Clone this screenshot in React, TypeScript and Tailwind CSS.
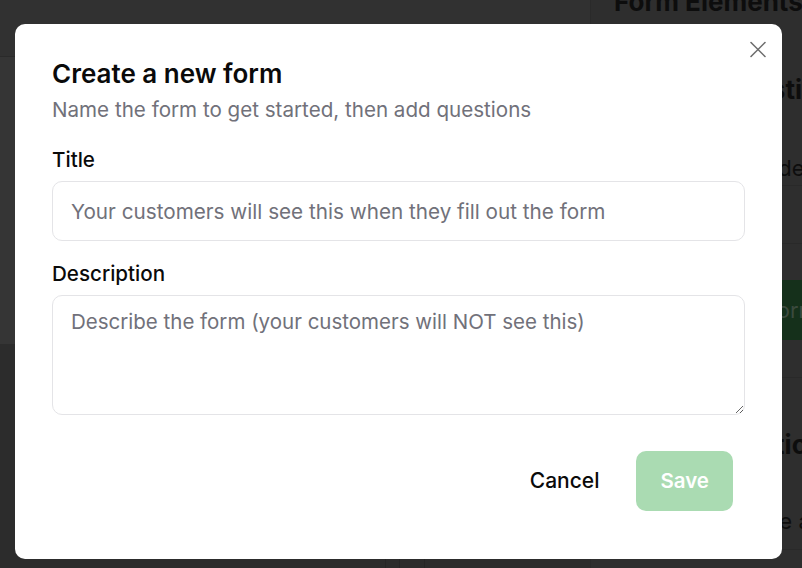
import React from "react";
import { X } from "lucide-react";

export default function App() {
  return (
    <div className="relative h-[568px] w-[802px] overflow-hidden bg-[#2e2e2e] font-['Inter',sans-serif]">
      {/* dimmed page behind */}
      <div className="flex h-full w-full">
        <div className="flex flex-1 flex-col">
          <div className="h-[57px] border-b border-[#2a2a2a] bg-[#313131]" />
          <div className="h-[287px] bg-[#353535]" />
          <div className="flex flex-1 bg-[#2c2c2c]">
            <div className="ml-[385px] mt-auto h-[10px] w-[15px] border-x border-[#262626]" />
            <div className="mt-auto h-[10px] w-[25px] border-r border-[#262626]" />
          </div>
        </div>
        <aside className="flex w-[212px] flex-col border-l border-[#2a2a2a] bg-[#2e2e2e] text-[#0d0d0d]">
          <div className="-mt-[14px] h-[32px] pl-[23px] text-[26px] font-bold leading-[32px] whitespace-nowrap">Form Elements</div>
          <div className="mt-[56px] ml-[128px] text-[26px] font-bold leading-[32px] whitespace-nowrap">Questions</div>
          <div className="mt-[48px] ml-[133px] text-[22px] leading-[28px] whitespace-nowrap">Hide details</div>
          <div className="mt-[3px] h-px bg-[#292929]" />
          <div className="mt-[57px] h-px bg-[#292929]" />
          <div className="mt-[36px] ml-[24px] flex h-[60px] items-center bg-[#15301b] pl-[106px] text-[22px] text-[#3b4a3e] whitespace-nowrap">
            Add form
          </div>
          <div className="mt-[37px] h-px bg-[#292929]" />
          <div className="mt-[51px] ml-[110px] text-[26px] font-bold leading-[32px] whitespace-nowrap">Analytics</div>
          <div className="mt-[46px] ml-[132px] text-[22px] leading-[28px] whitespace-nowrap">Create a</div>
          <div className="mt-[14px] h-px bg-[#292929]" />
        </aside>
      </div>

      {/* dialog */}
      <div className="absolute left-[15px] top-[24px] flex h-[535px] w-[767px] flex-col rounded-[10px] bg-white px-[37px] pt-[34px]">
        <button className="absolute right-[10px] top-[11px] flex h-[28px] w-[28px] items-center justify-center text-[#6b6b6b]">
          <X size={29} strokeWidth={1.3} />
        </button>
        <h2 className="text-[26px] font-semibold leading-[32px] text-[#0a0a0a]">Create a new form</h2>
        <p className="mt-[6px] text-[20.6px] leading-[28px] text-[#71717a]">Name the form to get started, then add questions</p>

        <label className="mt-[22px] text-[20.6px] font-medium leading-[28px] text-[#0a0a0a]">Title</label>
        <input
          className="mt-[7px] h-[60px] w-full rounded-[10px] border border-[#e4e4e7] px-[18px] text-[20.7px] text-[#0a0a0a] placeholder:text-[#71717a] outline-none"
          placeholder="Your customers will see this when they fill out the form"
        />

        <label className="mt-[19px] text-[20.6px] font-medium leading-[28px] text-[#0a0a0a]">Description</label>
        <textarea
          className="mt-[7px] h-[120px] w-full resize-y rounded-[10px] border border-[#e4e4e7] px-[18px] py-[12px] text-[20.5px] leading-[28px] text-[#0a0a0a] placeholder:text-[#71717a] outline-none"
          placeholder="Describe the form (your customers will NOT see this)"
        />

        <div className="mr-[12px] mt-[36px] flex justify-end gap-[13px]">
          <button className="h-[60px] rounded-[10px] px-[24px] text-[21px] font-medium text-[#0a0a0a]">Cancel</button>
          <button className="h-[60px] rounded-[10px] bg-[#aadbb2] px-[24px] text-[20.5px] font-semibold text-white">Save</button>
        </div>
      </div>
    </div>
  );
}
